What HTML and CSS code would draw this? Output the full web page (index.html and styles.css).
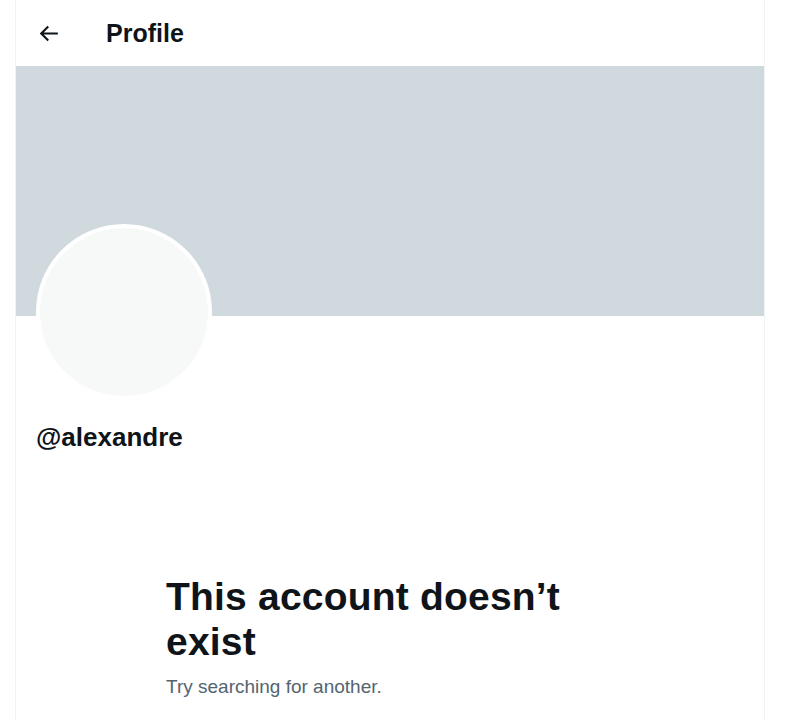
FILE: index.html
```html
<!DOCTYPE html>
<html>
<head>
<meta charset="utf-8">
<link rel="stylesheet" href="styles.css">
</head>
<body>
<main class="column">
  <header class="topbar">
    <div class="back">
      <svg viewBox="0 0 24 24" width="25" height="25"><path d="M7.414 13l5.043 5.04-1.414 1.42L3.586 12l7.457-7.46 1.414 1.42L7.414 11H21v2H7.414z" fill="#0f1419"/></svg>
    </div>
    <h2 class="title">Profile</h2>
  </header>
  <div class="banner"></div>
  <div class="profile">
    <div class="avatar"></div>
    <div class="handle">@alexandre</div>
  </div>
  <section class="empty">
    <h1 class="empty-title">This account doesn’t exist</h1>
    <p class="empty-sub">Try searching for another.</p>
  </section>
</main>
</body>
</html>
```
FILE: styles.css
```css
html, body {
  margin: 0;
  padding: 0;
  background: #ffffff;
  font-family: "Liberation Sans", Arial, sans-serif;
  color: #0f1419;
}
.column {
  margin-left: 15px;
  width: 748px;
  min-height: 720px;
  border-left: 1px solid #eff3f4;
  border-right: 1px solid #eff3f4;
}
.topbar {
  height: 66px;
  display: flex;
  align-items: center;
}
.back {
  width: 25px;
  height: 25px;
  margin-left: 20px;
  display: flex;
}
.title {
  margin: 0 0 0 45px;
  font-size: 25px;
  font-weight: 700;
  line-height: 30px;
}
.banner {
  height: 250px;
  background: #cfd9de;
}
.profile {
  padding: 0 20px;
}
.avatar {
  width: 168px;
  height: 168px;
  margin-top: -92px;
  border-radius: 50%;
  background: #f7f9f9;
  border: 4px solid #ffffff;
}
.handle {
  margin-top: 22px;
  font-size: 26px;
  font-weight: 700;
  line-height: 30px;
}
.empty {
  margin: 122px 0 0 150px;
  width: 440px;
}
.empty-title {
  margin: 0;
  font-size: 39px;
  line-height: 45px;
  font-weight: 700;
  letter-spacing: 0.2px;
}
.empty-sub {
  margin: 10px 0 0;
  font-size: 19px;
  line-height: 25px;
  color: #536471;
}
```
